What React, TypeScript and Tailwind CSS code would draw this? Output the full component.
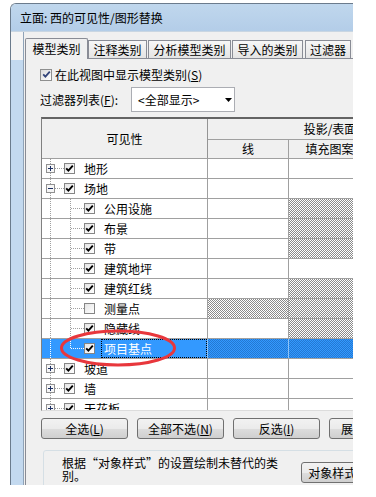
import React from "react";

type Kind = "plus" | "minus" | "child" | "last";
type Row = {
  label: string;
  kind: Kind;
  checked: boolean;
  line?: boolean;
  fill?: boolean;
  selected?: boolean;
};

const rows: Row[] = [
  { label: "地形", kind: "plus", checked: true },
  { label: "场地", kind: "minus", checked: true },
  { label: "公用设施", kind: "child", checked: true, fill: true },
  { label: "布景", kind: "child", checked: true, fill: true },
  { label: "带", kind: "child", checked: true, fill: true },
  { label: "建筑地坪", kind: "child", checked: true },
  { label: "建筑红线", kind: "child", checked: true, fill: true },
  { label: "测量点", kind: "child", checked: false, line: true, fill: true },
  { label: "隐藏线", kind: "child", checked: true, fill: true },
  { label: "项目基点", kind: "last", checked: true, line: true, fill: true, selected: true },
  { label: "坡道", kind: "plus", checked: true },
  { label: "墙", kind: "plus", checked: true },
  { label: "天花板", kind: "plus", checked: true },
];

function Check({ checked, color = "#000" }: { checked: boolean; color?: string }) {
  return (
    <span className="w-[11px] h-[11px] shrink-0 border border-[#858585] bg-linear-to-br from-[#e4e4e4] to-white flex items-center justify-center">
      {checked && (
        <svg width="9" height="9" viewBox="0 0 9 9" className="block">
          <path d="M1.2 4.3 L3.4 6.6 L7.8 1.6" fill="none" stroke={color} strokeWidth="1.9" />
        </svg>
      )}
    </span>
  );
}

function Tree({ kind, selected }: { kind: Kind; selected?: boolean }) {
  const c = selected ? "#ffffff" : "#a0a0a0";
  if (kind === "plus" || kind === "minus") {
    return (
      <svg width="22" height="19" className="block shrink-0">
        <line x1="8.5" y1="0" x2="8.5" y2="19" stroke={c} strokeDasharray="1 1" />
        <line x1="13" y1="9.5" x2="22" y2="9.5" stroke={c} strokeDasharray="1 1" />
        <rect x="4.5" y="5.5" width="8" height="8" fill="#f6f6f6" stroke="#919191" />
        <rect x="6" y="9" width="5" height="1" fill="#1c2f62" />
        {kind === "plus" && <rect x="8" y="7" width="1" height="5" fill="#1c2f62" />}
      </svg>
    );
  }
  return (
    <svg width="42" height="19" className="block shrink-0">
      <line x1="8.5" y1="0" x2="8.5" y2="19" stroke={c} strokeDasharray="1 1" />
      <line x1="28.5" y1="0" x2="28.5" y2={kind === "last" ? 10 : 19} stroke={c} strokeDasharray="1 1" />
      <line x1="29" y1="9.5" x2="42" y2="9.5" stroke={c} strokeDasharray="1 1" />
    </svg>
  );
}

const hatch =
  "bg-[image:repeating-conic-gradient(#8a8a8a_0%_25%,#ffffff_0%_50%)] bg-[length:2px_2px]";
const hatchSel =
  "bg-[image:repeating-conic-gradient(#2378d2_0%_25%,#3399ff_0%_50%)] bg-[length:2px_2px]";

function TableRow({ r }: { r: Row }) {
  const sel = !!r.selected;
  const vline = sel ? "border-[#8ec3f7]" : "border-[#a0a0a0]";
  return (
    <div className={`flex h-[20px] shrink-0 border-b border-[#a0a0a0] ${sel ? "bg-[#3399ff]" : "bg-white"}`}>
      <div className={`w-[166px] shrink-0 border-r ${vline} flex items-center`}>
        <Tree kind={r.kind} selected={sel} />
        <Check checked={r.checked} />
        {sel ? (
          <div className="ml-[6px] self-stretch flex-1 border border-dotted border-black pl-[2px] flex items-center text-white">
            {r.label}
          </div>
        ) : (
          <span className="ml-[9px]">{r.label}</span>
        )}
      </div>
      <div className={`w-[81px] shrink-0 border-r ${vline} ${r.line ? (sel ? hatchSel : hatch) : ""}`} />
      <div className={`w-[82px] shrink-0 border-r ${vline} ${r.fill ? (sel ? hatchSel : hatch) : ""}`} />
      <div className={`w-[82px] shrink-0 border-r ${vline}`} />
    </div>
  );
}

function Btn({ children }: { children: React.ReactNode }) {
  return (
    <div className="w-[87px] h-[21px] shrink-0 rounded-[3px] border border-[#707070] bg-[image:linear-gradient(#f2f2f2,#ebebeb_50%,#dddddd_51%,#cfcfcf)] flex items-center justify-center leading-none whitespace-nowrap">
      {children}
    </div>
  );
}

export default function App() {
  return (
    <div className="w-[376px] h-[497px] bg-white relative overflow-hidden pt-[3px] pl-[10px] text-[12px] text-black font-['Noto_Sans_CJK_SC',sans-serif]">
      <div className="w-[343px] h-[482px] overflow-hidden rounded-tl-[6px] border-l border-t border-[#6b7b8c] flex flex-col">
        {/* title bar */}
        <div className="h-[28px] shrink-0 border-b border-[#c9d6e2] bg-linear-to-b from-[#c0d7ed] to-[#b3cde8] flex items-center pl-[9px] leading-none whitespace-nowrap">
          立面: 西的可见性/图形替换
        </div>
        <div className="flex flex-1 min-h-0">
          {/* left frame */}
          <div className="w-[13px] shrink-0 flex flex-col border-r border-[#8fa3b8]">
            <div className="h-[28px] bg-[#f4f4f4]" />
            <div className="flex-1 bg-[#c3d9ef]" />
          </div>
          {/* client */}
          <div className="flex-1 bg-[#f0f0f0] pl-[1px] pt-[6px] flex flex-col min-w-0">
            {/* tabs */}
            <div className="flex items-end h-[20px] shrink-0 relative z-10 whitespace-nowrap">
              <div className="w-[63px] h-[21px] -mb-px border border-b-0 border-[#898c95] bg-[#f0f0f0] rounded-t-[2px] flex items-center justify-center leading-none">
                模型类别
              </div>
              <div className="w-[59px] h-[18px] border border-b-0 border-[#898c95] bg-linear-to-b from-[#f7f7f7] to-[#e4e4e4] flex items-center justify-center leading-none">
                注释类别
              </div>
              <div className="w-[83px] h-[18px] ml-[1px] border border-b-0 border-[#898c95] bg-linear-to-b from-[#f7f7f7] to-[#e4e4e4] flex items-center justify-center leading-none">
                分析模型类别
              </div>
              <div className="w-[71px] h-[18px] ml-[1px] border border-b-0 border-[#898c95] bg-linear-to-b from-[#f7f7f7] to-[#e4e4e4] flex items-center justify-center leading-none">
                导入的类别
              </div>
              <div className="w-[46px] h-[18px] ml-[2px] border border-b-0 border-[#898c95] bg-linear-to-b from-[#f7f7f7] to-[#e4e4e4] flex items-center justify-center leading-none">
                过滤器
              </div>
            </div>
            {/* panel */}
            <div className="flex-1 border-t border-l border-[#898c95] bg-[#f0f0f0] pl-[14px] pt-[9px] flex flex-col">
              <div className="flex items-center h-[13px] shrink-0 whitespace-nowrap">
                <span className="w-[12px] h-[12px] shrink-0 border border-[#8e8f8f] bg-linear-to-br from-[#dcdcdc] to-white flex items-center justify-center">
                  <svg width="9" height="9" viewBox="0 0 9 9" className="block">
                    <path d="M1.2 4.3 L3.4 6.6 L7.8 1.6" fill="none" stroke="#33457a" strokeWidth="1.8" />
                  </svg>
                </span>
                <span className="ml-[3px] leading-none">
                  在此视图中显示模型类别(<span className="underline">S</span>)
                </span>
              </div>
              <div className="flex items-center h-[25px] mt-[6px] shrink-0 whitespace-nowrap">
                <span className="w-[91px] shrink-0 leading-none">
                  过滤器列表(<span className="underline">F</span>):
                </span>
                <div className="w-[104px] h-[25px] shrink-0 border border-[#abadb3] bg-white flex items-center pl-[6px] leading-none">
                  <span>&lt;全部显示&gt;</span>
                  <svg width="7" height="4" className="block ml-auto mr-[2px]">
                    <path d="M0 0H7L3.5 4Z" fill="#000" />
                  </svg>
                </div>
              </div>
              {/* table */}
              <div className="ml-[1px] mt-[5px] h-[294px] w-[500px] shrink-0 border-t-2 border-l border-b border-t-[#646464] border-l-[#808080] border-b-[#dcdcdc] overflow-hidden bg-white flex flex-col leading-none whitespace-nowrap">
                <div className="flex h-[40px] shrink-0 border-b border-[#a0a0a0] bg-[#f0f0f0]">
                  <div className="w-[166px] shrink-0 border-r border-[#949494] flex items-center justify-center">
                    可见性
                  </div>
                  <div className="w-[245px] shrink-0 flex flex-col border-r border-[#a0a0a0]">
                    <div className="h-[21px] shrink-0 border-b border-[#a0a0a0] flex items-center justify-center">
                      投影/表面
                    </div>
                    <div className="flex flex-1">
                      <div className="w-[81px] shrink-0 border-r border-[#a0a0a0] flex items-center justify-center">线</div>
                      <div className="w-[82px] shrink-0 border-r border-[#a0a0a0] flex items-center justify-center">填充图案</div>
                      <div className="w-[82px] shrink-0 flex items-center justify-center">透明度</div>
                    </div>
                  </div>
                  <div className="w-[160px] shrink-0 flex items-center justify-center">截面</div>
                </div>
                {rows.map((r) => (
                  <TableRow key={r.label} r={r} />
                ))}
              </div>
              {/* buttons */}
              <div className="flex gap-[9px] ml-[1px] mt-[7px] shrink-0">
                <Btn>
                  全选(<span className="underline">L</span>)
                </Btn>
                <Btn>
                  全部不选(<span className="underline">N</span>)
                </Btn>
                <Btn>
                  反选(<span className="underline">I</span>)
                </Btn>
                <Btn>
                  展开全部(<span className="underline">X</span>)
                </Btn>
              </div>
              {/* group box */}
              <div className="ml-[3px] mt-[11px] w-[330px] h-[50px] shrink-0 border border-[#d5dfe5] rounded-[3px] flex">
                <div className="w-[257px] shrink-0 pl-[18px] pt-[5px] leading-[13px] whitespace-nowrap">
                  根据“对象样式”的设置绘制未替代的类
                  <br />
                  别。
                </div>
                <div className="mt-[11px]">
                  <Btn>
                    对象样式(<span className="underline">Y</span>)...
                  </Btn>
                </div>
              </div>
            </div>
          </div>
        </div>
      </div>
      <svg width="376" height="497" className="absolute left-0 top-0 pointer-events-none">
        <ellipse cx="118" cy="348" rx="56.5" ry="17" fill="none" stroke="#e8373c" strokeWidth="3" />
      </svg>
    </div>
  );
}
